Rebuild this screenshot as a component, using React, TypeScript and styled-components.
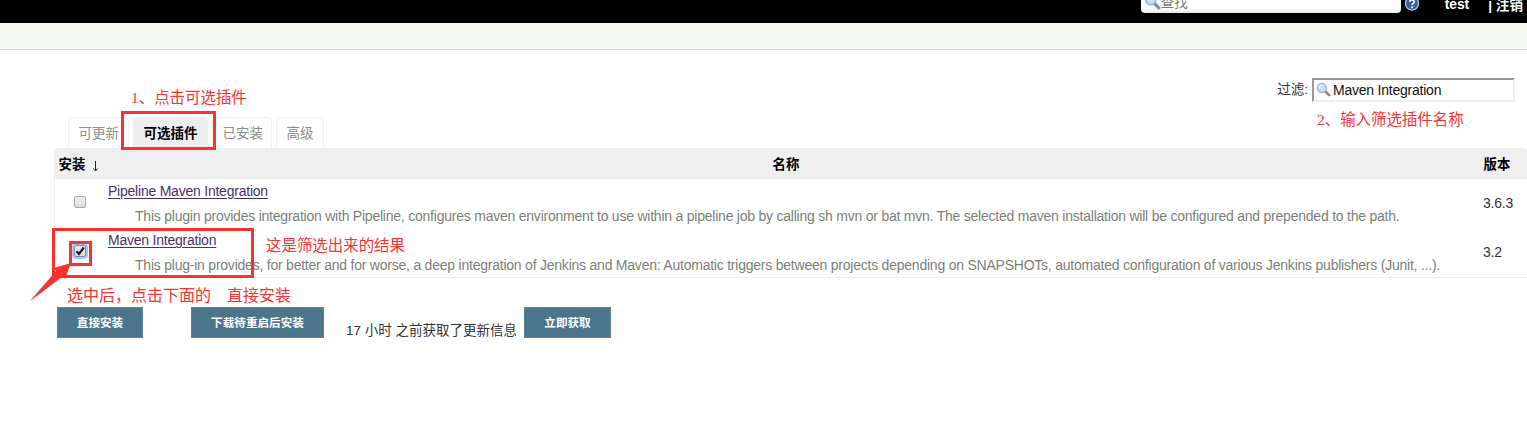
import React from 'react';
import styled, { createGlobalStyle, css } from 'styled-components';

const Global = createGlobalStyle`
  * { box-sizing: border-box; }
  html, body { margin: 0; overflow: hidden; }
  body {
    background: #fff;
    color: #333;
    font-family: "Liberation Sans", "Noto Sans CJK SC", sans-serif;
    font-size: 13.5px;
  }
`;

const latinText = css`
  font-size: 14px;
  letter-spacing: -0.226px;
`;

const Page = styled.div`
  position: relative;
  width: 1527px;
  height: 429px;
  overflow: hidden;
`;

const Header = styled.header`
  display: flex;
  justify-content: flex-end;
  align-items: flex-start;
  height: 23px;
  background: #000;
  color: #fff;
  font-weight: bold;
  font-size: 14px;
  line-height: 20px;
  padding-right: 4px;
  overflow: hidden;
`;

const SearchBox = styled.div`
  display: flex;
  width: 260px;
  height: 25px;
  margin-top: -12px;
  padding: 5px 0 0 3px;
  border-radius: 4px;
  background: linear-gradient(#fff 80%, #e8e8e8);
  color: #777;
  font-weight: normal;
  font-size: 13.5px;
  line-height: 19px;
  svg { flex: none; margin-right: 0; }
`;

const HelpIcon = styled.svg`
  margin: -4px 0 0 3px;
`;

const UserName = styled.span`
  margin: -5px 0 0 25px;
  font-size: 13.8px;
`;

const Logout = styled.span`
  margin: -4px 0 0 19px;
  font-size: 13.6px;
  white-space: nowrap;
`;

const Breadcrumbs = styled.div`
  height: 27px;
  background: #f6faf2;
  border-bottom: 1px solid #ccc;
`;

const Main = styled.main`
  padding-left: 54px;
`;

const FilterRow = styled.div`
  display: flex;
  justify-content: flex-end;
  padding: 28px 12px 0 0;
  height: 67px;
`;

const FilterLabel = styled.span`
  line-height: 24px;
  margin-right: 4px;
`;

const FilterInput = styled.div`
  display: flex;
  align-items: center;
  width: 203px;
  height: 24px;
  border: 2px solid;
  border-color: #999 #eee #eee #999;
  padding: 0 0 1px 2px;
  color: #111;
  ${latinText}
  svg { margin-right: 2px; }
`;

const Tabs = styled.nav`
  display: flex;
  gap: 4px;
  height: 31px;
  padding-left: 14px;
`;

const Tab = styled.div<{ $active?: boolean; $width: number }>`
  width: ${p => p.$width}px;
  padding-left: 9.5px;
  font-size: 13.5px;
  line-height: 31px;
  white-space: nowrap;
  border: 1px solid ${p => (p.$active ? '#eee' : '#f0f0f0')};
  border-bottom: 0;
  border-radius: 4px 4px 0 0;
  background: ${p => (p.$active ? '#eee' : '#fff')};
  color: ${p => (p.$active ? '#000' : '#8c8c8c')};
  font-weight: ${p => (p.$active ? 'bold' : 'normal')};
`;

const Table = styled.section`
  height: 130px;
  border: 1px solid #eee;
  border-right: 0;
  border-radius: 4px 4px 0 0;
`;

const columns = '53px 1fr 47px';

const TableHead = styled.div`
  display: grid;
  grid-template-columns: ${columns};
  height: 30px;
  background: #efefef;
  color: #000;
  font-weight: bold;
  font-size: 13.4px;
  line-height: 31px;
`;

const HeadCell = styled.div<{ $center?: boolean }>`
  padding: ${p => (p.$center ? '0 16px 0 0' : '0 0 0 3.5px')};
  text-align: ${p => (p.$center ? 'center' : 'left')};
  white-space: nowrap;
`;

const SortArrow = styled.svg`
  margin-left: 3px;
  vertical-align: -3px;
`;

const Row = styled.div`
  display: grid;
  grid-template-columns: ${columns};
  height: 49px;
`;

const CheckCell = styled.div`
  padding: 17px 0 0 19px;
`;

const Checkbox = styled.div<{ $checked?: boolean }>`
  width: 12px;
  height: 12px;
  border: 1px solid ${p => (p.$checked ? '#7a8ca5' : '#a8a8a8')};
  border-radius: 2px;
  background: linear-gradient(#eee, #ddd);
  box-shadow: ${p => (p.$checked ? '0 0 0 2px #a5c7fa' : 'none')};
  svg { display: block; }
`;

const PluginLink = styled.a`
  display: block;
  width: max-content;
  ${latinText}
  color: #4a3068;
  text-decoration: underline;
  text-underline-offset: 2px;
  line-height: 16px;
  margin-top: 4px;
`;

const Description = styled.div`
  margin: 9px 0 0 27px;
  ${latinText}
  color: #7c7f78;
  line-height: 16px;
  white-space: nowrap;
`;

const Version = styled.div`
  padding-left: 3px;
  ${latinText}
  line-height: 49px;
`;

const Actions = styled.div`
  display: flex;
  padding: 29px 0 0 3px;
`;

const Button = styled.button<{ $width: number }>`
  width: ${p => p.$width}px;
  height: 31px;
  padding: 0;
  border: 1px solid #5b8499;
  background: #4b758b;
  color: #fff;
  font: bold 11.6px/28px "Liberation Sans", "Noto Sans CJK SC", sans-serif;
  white-space: nowrap;
`;

const UpdateInfo = styled.span`
  width: 178px;
  line-height: 47px;
  height: 31px;
  white-space: nowrap;
`;

const Spacer = styled.span<{ $width: number }>`
  width: ${p => p.$width}px;
`;

const Note = styled.div<{ $x: number; $y: number; $size?: number }>`
  position: absolute;
  left: ${p => p.$x}px;
  top: ${p => p.$y}px;
  color: #ff3030;
  font-family: "Liberation Serif", "Noto Sans CJK SC", serif;
  font-size: ${p => p.$size ?? 15.45}px;
  line-height: 20px;
  white-space: pre;
`;

const Mark = styled.div<{ $x: number; $y: number; $w: number; $h: number; $line: number }>`
  position: absolute;
  left: ${p => p.$x}px;
  top: ${p => p.$y}px;
  width: ${p => p.$w}px;
  height: ${p => p.$h}px;
  border: ${p => p.$line}px solid #fb3030;
`;

const Arrow = styled.svg`
  position: absolute;
  left: 28px;
  top: 260px;
`;

const Magnifier = ({ size }: { size: number }) => (
  <svg width={size} height={size} viewBox="0 0 16 16">
    <path d="M9.8 9.8 14 14" stroke="#8d8b88" strokeWidth="3" strokeLinecap="round" />
    <circle cx="6.3" cy="6.3" r="4.8" fill="#c5dff6" stroke="#9bb0c8" strokeWidth="1.4" />
    <path d="M3.5 6a3 3 0 0 1 3-3" fill="none" stroke="#fff" strokeWidth="1.2" />
  </svg>
);

const plugins = [
  {
    name: 'Pipeline Maven Integration',
    text: 'This plugin provides integration with Pipeline, configures maven environment to use within a pipeline job by calling sh mvn or bat mvn. The selected maven installation will be configured and prepended to the path.',
    version: '3.6.3',
    checked: false,
  },
  {
    name: 'Maven Integration',
    text: 'This plug-in provides, for better and for worse, a deep integration of Jenkins and Maven: Automatic triggers between projects depending on SNAPSHOTs, automated configuration of various Jenkins publishers (Junit, ...).',
    version: '3.2',
    checked: true,
  },
];

export default function App() {
  return (
    <Page>
      <Global />
      <Header>
        <SearchBox>
          <Magnifier size={17} />
          查找
        </SearchBox>
        <HelpIcon width="16" height="16" viewBox="0 0 16 16">
          <circle cx="8" cy="7.5" r="6.6" fill="#3a5f9f" stroke="#c3d0e4" strokeWidth="1.2" />
          <path d="M5.8 5.8C6 3.2 10.4 3.3 10.1 6c-.2 1.4-2 1.5-2 3" fill="none" stroke="#fff" strokeWidth="1.6" />
          <circle cx="8.1" cy="11.2" r="1" fill="#fff" />
        </HelpIcon>
        <UserName>test</UserName>
        <Logout>| 注销</Logout>
      </Header>
      <Breadcrumbs />
      <Main>
        <FilterRow>
          <FilterLabel>过滤:</FilterLabel>
          <FilterInput>
            <Magnifier size={15} />
            Maven Integration
          </FilterInput>
        </FilterRow>
        <Tabs>
          <Tab $width={61}>可更新</Tab>
          <Tab $width={75} $active>可选插件</Tab>
          <Tab $width={60}>已安装</Tab>
          <Tab $width={48}>高级</Tab>
        </Tabs>
        <Table>
          <TableHead>
            <HeadCell>
              安装{' '}
              <SortArrow width="8" height="12" viewBox="0 0 8 12">
                <path d="M3.5 1v10M1.5 8.5l2 2.5 2-2.5" fill="none" stroke="#222" />
              </SortArrow>
            </HeadCell>
            <HeadCell $center>名称</HeadCell>
            <HeadCell>版本</HeadCell>
          </TableHead>
          {plugins.map(p => (
            <Row key={p.name}>
              <CheckCell>
                <Checkbox $checked={p.checked}>
                  {p.checked && (
                    <svg width="10" height="10" viewBox="0 0 10 10">
                      <path d="M1.5 5.2 4 8 8.8 1.5" fill="none" stroke="#222" strokeWidth="2.3" />
                    </svg>
                  )}
                </Checkbox>
              </CheckCell>
              <div>
                <PluginLink>{p.name}</PluginLink>
                <Description>{p.text}</Description>
              </div>
              <Version>{p.version}</Version>
            </Row>
          ))}
        </Table>
        <Actions>
          <Button $width={86}>直接安装</Button>
          <Spacer $width={48} />
          <Button $width={133}>下载待重启后安装</Button>
          <Spacer $width={22} />
          <UpdateInfo>17 小时 之前获取了更新信息</UpdateInfo>
          <Button $width={87}>立即获取</Button>
        </Actions>
      </Main>

      <Note $x={131} $y={88}>1、点击可选插件</Note>
      <Note $x={1317} $y={110}>2、输入筛选插件名称</Note>
      <Note $x={266} $y={236}>这是筛选出来的结果</Note>
      <Note $x={67} $y={286} $size={16}>选中后，点击下面的　直接安装</Note>
      <Mark $x={121} $y={111} $w={95} $h={39} $line={3} />
      <Mark $x={52} $y={228} $w={202} $h={50} $line={3} />
      <Mark $x={69} $y={241} $w={23} $h={25} $line={3} />
      <Arrow width="44" height="42" viewBox="0 0 44 42">
        <path d="M2 41 28 11 26 8 43 3 37 19 34 17Z" fill="#fb3030" />
      </Arrow>
    </Page>
  );
}
